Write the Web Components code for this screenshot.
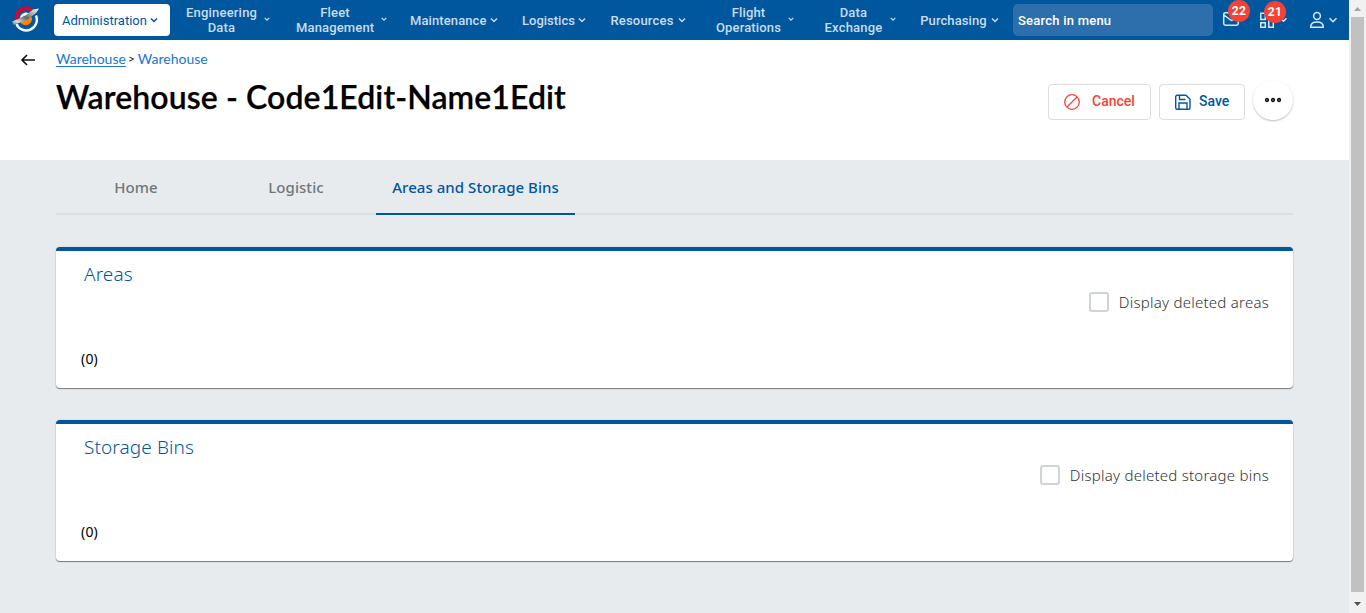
<!DOCTYPE html>
<html lang="en"><head><meta charset="utf-8"><title>Warehouse</title>
<style>
html,body{margin:0;height:100%;overflow:hidden}
body{background:#e7ebee;font-family:"Noto Sans",sans-serif;color:#000}
</style></head><body>
<app-shell></app-shell>
<script>
const define=(name,html)=>{
  const t=document.createElement('template');t.innerHTML=html;
  customElements.define(name,class extends HTMLElement{
    constructor(){super();this.attachShadow({mode:'open'}).append(t.content.cloneNode(true));}
  });
};

define('nav-item',`<style>
:host{display:flex;align-items:center;height:32px;margin-right:var(--gap,0px);font:500 13px/15px Roboto,sans-serif;color:#c9dcec;box-sizing:border-box}
:host([active]){background:#fff;color:#00579d;border-radius:4px;padding-left:8px;font-weight:400;width:116px}
.label{width:var(--w);text-align:center;white-space:nowrap;letter-spacing:var(--ls,0)}
svg{flex:none;width:8px;height:8px;margin-left:4px}
:host([two]) svg{width:6px;height:6px;margin-left:7px;margin-bottom:2px}
:host([two]) path{stroke-width:1.800}
</style><div class="label"><slot></slot></div><svg viewBox="0 0 8 8"><path d="M1 2.500 4 5.500 7 2.500" fill="none" stroke="currentColor" stroke-width="1.500"/></svg>`);

define('count-badge',`<style>
:host{position:absolute;width:22px;height:22px;border-radius:50%;background:#f44336;color:#fff;font:700 12px/22px Roboto,sans-serif;text-align:center;letter-spacing:.4px}
</style><slot></slot>`);

define('app-logo',`<style>:host{display:block;width:28px;height:28px}svg{display:block}</style>
<svg width="28" height="28" viewBox="0 0 28 28">
<defs><linearGradient id="m" x1="0" y1="1" x2="1" y2="0"><stop offset="0" stop-color="#666"/><stop offset=".2" stop-color="#ddd"/><stop offset=".48" stop-color="#666"/><stop offset=".75" stop-color="#bbb"/><stop offset="1" stop-color="#fff"/></linearGradient></defs>
<path d="M8 15a6 6 0 0 1 9-5.500l-3 4z" fill="#fff"/><path d="M19.500 12.500a6 6 0 0 1-11.500 5z" fill="#ff8200"/>
<path d="M4.800 16a9.300 9.300 0 0 1 16-8.500" fill="none" stroke="#e4002b" stroke-width="3.800"/>
<path d="M24 11.500a10.600 10.600 0 0 1-19.600 8.500" fill="none" stroke="#fff" stroke-width="2.400"/>
<path d="M0 17.500 5 15.500 14 11 21 5.500 27 4.500 24 9 15 16 4 20 1.500 21z" fill="url(#m)"/>
</svg>`);

define('search-box',`<style>
:host{display:block;width:200px;height:32px;border-radius:5px;background:#2d6fac;color:#fff;font:500 13px/33px Roboto,sans-serif;box-sizing:border-box;padding-left:5px;letter-spacing:.23px;margin-left:14px;flex:none}
</style><slot></slot>`);

define('nav-tools',`<style>
:host{display:flex;height:40px;color:#fff;width:136px;position:relative}
svg{display:block;flex:none}
count-badge.a{left:15px;top:0}count-badge.b{left:51px;top:1px}
</style>
<svg width="136" height="40" viewBox="1213 0 136 40" fill="none" stroke="#d9e8f4" stroke-width="1.500">
<path d="M1238.300 17v6.500a1.700 1.700 0 0 1-1.700 1.700h-11.200a1.700 1.700 0 0 1-1.700-1.700V14.500a1.700 1.700 0 0 1 1.700-1.700h8M1224 15l7.300 5.500 6-2.500"/>
<path d="M1265 13.200h-4.200v6.300h4.500v-6M1260.800 22.800h4.500v4.500h-4.500zM1268.800 19v8.300h4.500V19M1268.800 13.200h4.500v3"/>
<path d="M1280.500 18.200l3 3 3-3M1329.500 18.300l3.500 3.500 3.500-3.500"/>
<circle cx="1317" cy="16" r="3.400"/><path d="M1310.700 27.200q0-5.200 6.300-5.200t6.300 5.200z"/>
</svg><count-badge class="a">22</count-badge><count-badge class="b">21</count-badge>`);

define('top-bar',`<style>
:host{display:flex;align-items:center;height:40px;background:#00579d}
app-logo{margin:0 14px 4px 12px;flex:none}
nav-item{flex:none}
</style><app-logo></app-logo>
<nav-item active style="--w:84px;--gap:16px;--ls:0px">Administration</nav-item>
<nav-item two style="--w:71px;--gap:26px;--ls:.2px">Engineering<br>Data</nav-item>
<nav-item two style="--w:78px;--gap:23px;--ls:.15px">Fleet<br>Management</nav-item>
<nav-item style="--w:76px;--gap:24px;--ls:.1px">Maintenance</nav-item>
<nav-item style="--w:52px;--gap:24px;--ls:0px">Logistics</nav-item>
<nav-item style="--w:64px;--gap:30px;--ls:.2px">Resources</nav-item>
<nav-item two style="--w:65px;--gap:30px;--ls:.15px">Flight<br>Operations</nav-item>
<nav-item two style="--w:59px;--gap:24px;--ls:.2px">Data<br>Exchange</nav-item>
<nav-item style="--w:67px;--ls:.1px">Purchasing</nav-item>
<search-box>Search in menu</search-box>
<nav-tools></nav-tools>`);

define('bread-crumb',`<style>
:host{display:flex;height:18px;font:14px/18px Lato,sans-serif;color:#1976d2;white-space:pre}
a{color:inherit;text-decoration:underline;text-underline-offset:2px}
i{font-style:normal;color:#222;font-size:12px;margin:0 3px 0 2px}
</style><a>Warehouse</a><i>&gt;</i><span>Warehouse</span>`);

define('action-button',`<style>
:host{display:flex;align-items:center;box-sizing:border-box;height:36px;border:1px solid #dcdcdc;border-radius:4px;padding-left:15px;font:500 14px/32px Roboto,sans-serif;color:var(--c)}
::slotted(svg){flex:none}
span{margin:0 0 2px var(--g)}
</style><slot name="icon"></slot><span><slot></slot></span>`);

define('page-header',`<style>
:host{display:flex;height:120px;background:#fff;box-sizing:border-box;padding:10px 56px 0 20px}
.back{width:36px;height:20px;flex:none}
.main{flex:1}
h1{margin:10px 0 0;font:600 32px/38px Lato,sans-serif;letter-spacing:.1px;white-space:nowrap;-webkit-text-stroke:.25px #000}
.actions{display:flex;gap:8px;margin-top:34px}
.more{width:40px;height:40px;border-radius:50%;box-shadow:0 1px 2px #0004;margin-top:-4px;display:flex;align-items:center;justify-content:center}
</style>
<svg class="back" viewBox="0 0 36 20"><path d="M15 10H2M7 5 2 10 7 15" fill="none" stroke="#111" stroke-width="1.600"/></svg>
<div class="main"><bread-crumb></bread-crumb><h1>Warehouse - Code1Edit-Name1Edit</h1></div>
<div class="actions">
<action-button style="--c:#f44336;--g:11px;width:103px"><svg slot="icon" width="17" height="18" viewBox="0 0 17 18" fill="none" stroke="#f44336" stroke-width="1.300"><circle cx="8" cy="9" r="7.300"/><path d="M3 14 13 4"/></svg>Cancel</action-button>
<action-button style="--c:#00579d;--g:8px;width:86px"><svg slot="icon" width="16" height="18" viewBox="0 0 16 18" fill="none" stroke="#00579d" stroke-width="1.400"><path d="M2.200 2.200h8.800l4 4v8.600a1.500 1.500 0 0 1-1.500 1.500h-11.300A1.500 1.500 0 0 1 .7 14.800v-11A1.500 1.500 0 0 1 2.200 2.200zM4 16v-6h8v6M4.500 2.500v4h6"/></svg>Save</action-button>
<div class="more"><svg width="18" height="6" viewBox="0 0 18 6" fill="#777" stroke="#111" stroke-width="1.300"><circle cx="3" cy="3" r="1.500"/><circle cx="9" cy="3" r="1.500"/><circle cx="15" cy="3" r="1.500"/></svg></div>
</div>`);

define('tab-item',`<style>
:host{display:block;box-sizing:border-box;width:160px;height:55px;text-align:center;font:500 15px/55px "Noto Sans",sans-serif;color:#6f777d;white-space:nowrap;letter-spacing:.05px}
:host([active]){width:199px;color:#00579d;border-bottom:2px solid #00579d}
</style><slot></slot>`);
define('tab-bar',`<style>:host{display:flex;height:55px;box-shadow:inset 0 -2px #dce0e4}</style><slot></slot>`);

define('check-field',`<style>
:host{display:flex;align-items:center;justify-content:flex-end;gap:10px;height:22px;font:300 15px/22px "Noto Sans",sans-serif;color:#333;letter-spacing:.25px}
i{box-sizing:border-box;width:20px;height:20px;border:2px solid #ced4da;border-radius:3px}
</style><i></i><span><slot></slot></span>`);

define('list-card',`<style>
:host{display:flex;flex-direction:column;box-sizing:border-box;height:141px;margin-top:32px;background:#fff;border-top:4px solid #00579d;border-radius:4px;padding:10px 24px 0;box-shadow:0 1px 1px #0007,0 0 2px #0002}
h2{margin:0 4px 4px;font:300 19px/26px "Noto Sans",sans-serif;color:#00579d;letter-spacing:.1px}
.count{margin:35px 0 0 1px;font:400 14px/22px "Noto Sans",sans-serif;letter-spacing:.2px}
</style><h2><slot name="title"></slot></h2><check-field><slot name="option"></slot></check-field><div class="count">(0)</div>`);

define('scroll-bar',`<style>
:host{display:flex;flex-direction:column;align-items:center;width:17px;height:613px;background:#f1f1f1}
.thumb{width:13px;height:575px;background:#c1c1c1}
svg{display:block}
</style><svg width="17" height="17"><path d="M5 11h7L8.500 7z" fill="#a3a3a3"/></svg><div class="thumb"></div><svg width="17" height="21"><path d="M5 10h7L8.500 14z" fill="#505050"/></svg>`);

define('app-shell',`<style>
:host{display:grid;grid-template-columns:1349px 17px;height:613px;overflow:hidden}
main{padding:0 56px}
</style>
<div><top-bar></top-bar><page-header></page-header>
<main><tab-bar><tab-item>Home</tab-item><tab-item>Logistic</tab-item><tab-item active>Areas and Storage Bins</tab-item></tab-bar>
<list-card><span slot="title">Areas</span><span slot="option">Display deleted areas</span></list-card>
<list-card><span slot="title">Storage Bins</span><span slot="option">Display deleted storage bins</span></list-card>
</main></div><scroll-bar></scroll-bar>`);
</script></body></html>
